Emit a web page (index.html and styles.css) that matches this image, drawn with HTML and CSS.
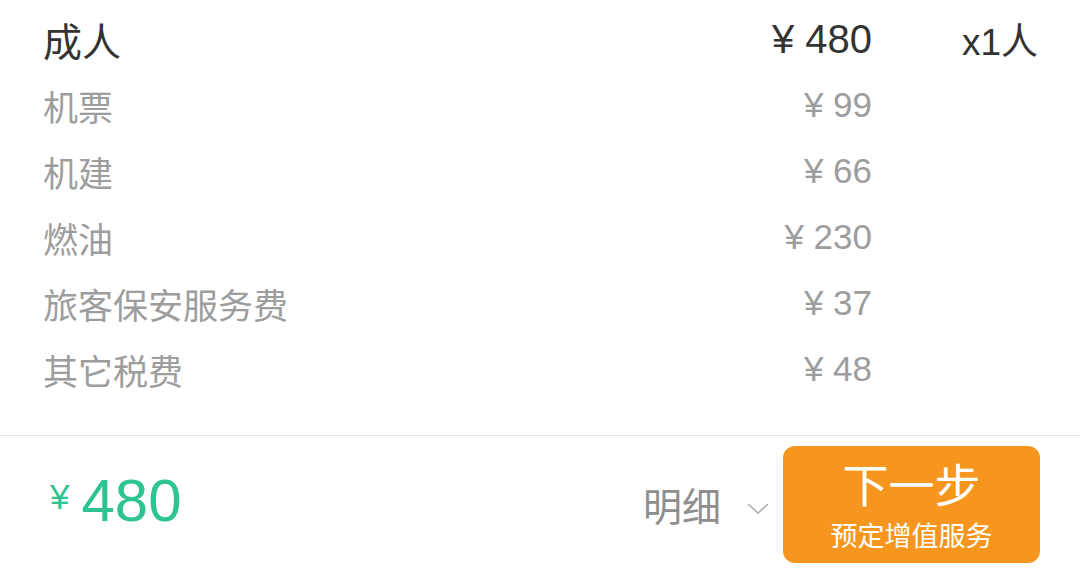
FILE: index.html
```html
<!DOCTYPE html>
<html lang="zh-CN">
<head>
  <meta charset="UTF-8">
  <meta name="viewport" content="width=device-width, initial-scale=1.0">
  <title>价格明细</title>
  <link rel="stylesheet" href="styles.css">
</head>
<body>
  <div class="page">
    <div class="detail">
      <div class="row row-main">
        <span class="label">成人</span>
        <span class="amount">¥ 480</span>
        <span class="count">x1人</span>
      </div>
      <div class="row">
        <span class="label">机票</span>
        <span class="amount">¥ 99</span>
        <span class="count"></span>
      </div>
      <div class="row">
        <span class="label">机建</span>
        <span class="amount">¥ 66</span>
        <span class="count"></span>
      </div>
      <div class="row">
        <span class="label">燃油</span>
        <span class="amount">¥ 230</span>
        <span class="count"></span>
      </div>
      <div class="row">
        <span class="label">旅客保安服务费</span>
        <span class="amount">¥ 37</span>
        <span class="count"></span>
      </div>
      <div class="row">
        <span class="label">其它税费</span>
        <span class="amount">¥ 48</span>
        <span class="count"></span>
      </div>
    </div>

    <div class="footer">
      <div class="total"><span class="yen">¥</span>480</div>
      <div class="toggle">
        明细
        <svg class="chevron" width="22" height="12" viewBox="0 0 22 12">
          <path d="M1 1 L11 10 L21 1" fill="none" stroke="#aaa" stroke-width="1.5"/>
        </svg>
      </div>
      <button class="btn-next">
        <span class="btn-title">下一步</span>
        <span class="btn-sub">预定增值服务</span>
      </button>
    </div>
  </div>
</body>
</html>
```

FILE: styles.css
```css
* {
  box-sizing: border-box;
  margin: 0;
  padding: 0;
}

body {
  font-family: "Liberation Sans", "Noto Sans CJK SC", sans-serif;
  background-color: #fff;
  color: #333;
  width: 1080px;
  height: 580px;
  overflow: hidden;
}

.page {
  display: flex;
  flex-direction: column;
  height: 100%;
}

.detail {
  padding: 6px 42px 33px 43px;
  border-bottom: 1px solid #e3e3e3;
}

.row {
  display: flex;
  align-items: center;
  height: 66px;
  color: #9d9d9d;
  font-size: 35px;
}

.row-main {
  color: #333;
  font-size: 40px;
}

.label {
  flex: 1;
  font-family: "Noto Sans CJK SC", sans-serif;
  font-size: 35px;
}

.row-main .label {
  font-size: 39px;
}

.amount {
  text-align: right;
  white-space: nowrap;
}

.count {
  width: 166px;
  text-align: right;
  font-size: 37px;
}

.footer {
  flex: 1;
  display: flex;
  align-items: flex-start;
  padding: 10px 40px 0 50px;
}

.total {
  flex: 1;
  color: #2ec48f;
  font-size: 60px;
  margin-top: 20px;
}

.total .yen {
  font-size: 35px;
  margin-right: 12px;
  vertical-align: 12px;
}

.toggle {
  display: flex;
  align-items: center;
  color: #8e8e8e;
  font-family: "Noto Sans CJK SC", sans-serif;
  font-size: 39px;
  margin-top: 30px;
  margin-right: 14px;
}

.chevron {
  margin-left: 26px;
  margin-top: 10px;
}

.btn-next {
  display: flex;
  flex-direction: column;
  align-items: center;
  width: 257px;
  height: 117px;
  background: #f7961e;
  color: #fff;
  border: none;
  border-radius: 12px;
  font-family: "Noto Sans CJK SC", sans-serif;
  padding-top: 6px;
}

.btn-title {
  font-size: 46px;
  line-height: 60px;
}

.btn-sub {
  font-size: 27px;
  line-height: 46px;
}
```
